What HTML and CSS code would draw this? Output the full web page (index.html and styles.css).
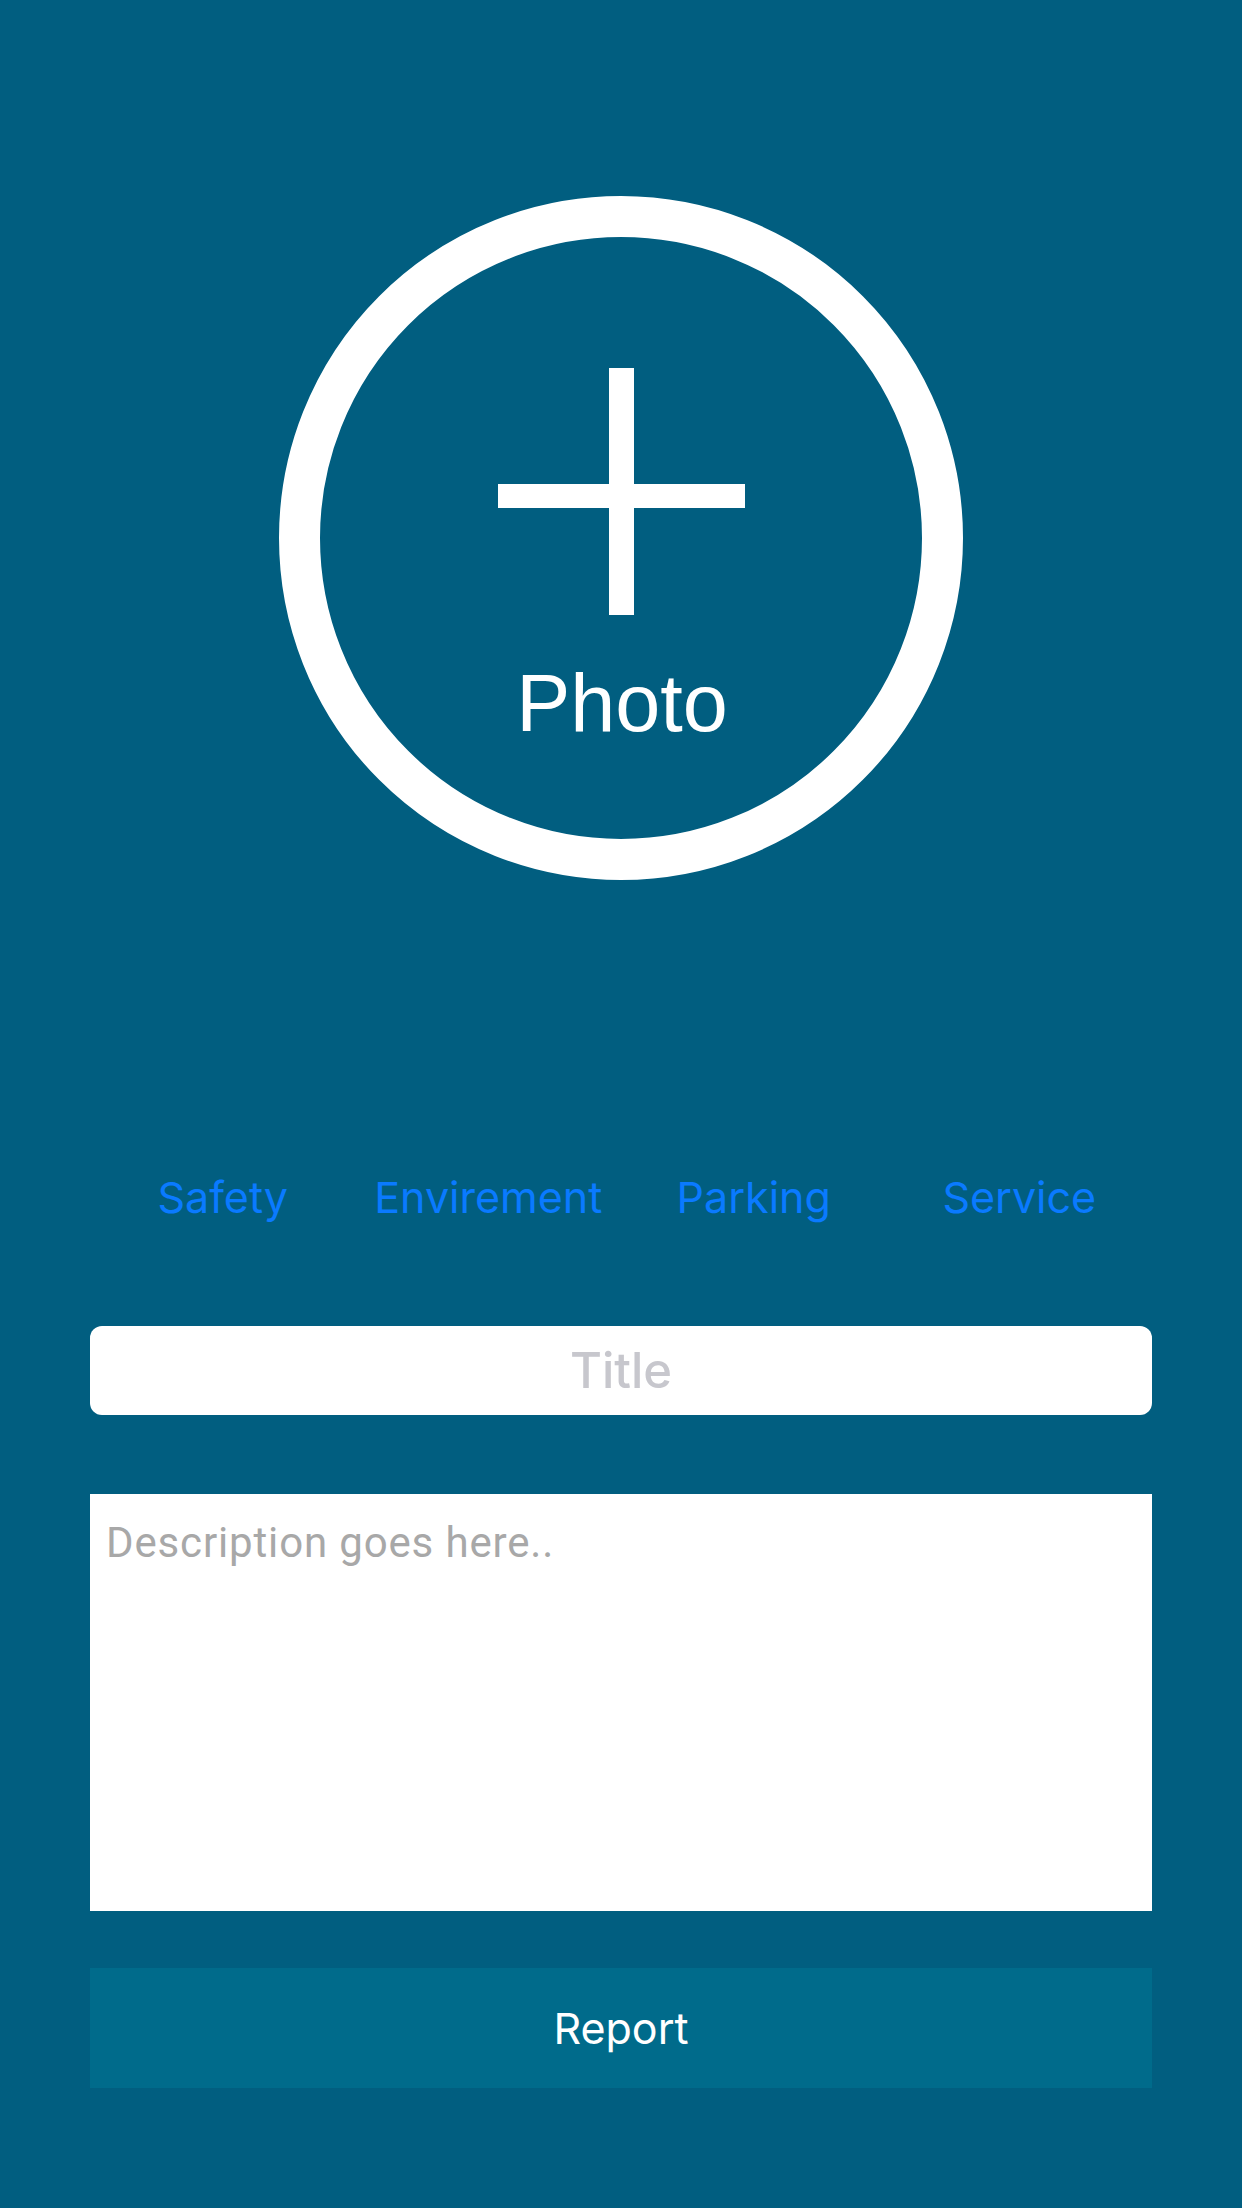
FILE: index.html
```html
<!DOCTYPE html>
<html>
<head>
<meta charset="utf-8">
<link rel="stylesheet" href="styles.css">
</head>
<body>
<div class="screen">
  <div class="photo-wrap">
    <svg class="photo-btn" width="684" height="684" viewBox="0 0 684 684">
      <circle cx="342" cy="342" r="321.5" fill="none" stroke="#ffffff" stroke-width="41"/>
      <rect x="330" y="172" width="25" height="247" fill="#ffffff"/>
      <rect x="219" y="288" width="247" height="24" fill="#ffffff"/>
      <text x="343" y="535" text-anchor="middle" class="photo-label">Photo</text>
    </svg>
  </div>
  <div class="categories">
    <div class="cat">Safety</div>
    <div class="cat">Envirement</div>
    <div class="cat">Parking</div>
    <div class="cat">Service</div>
  </div>
  <div class="title-field"><span class="title-ph">Title</span></div>
  <div class="desc-field"><span class="desc-ph">Description goes here..</span></div>
  <div class="report-btn">Report</div>
</div>
</body>
</html>
```
FILE: styles.css
```css
html, body {
  margin: 0;
  padding: 0;
}
body {
  background: #015e80;
  width: 1242px;
  height: 2208px;
  overflow: hidden;
}
.screen {
  display: flex;
  flex-direction: column;
  padding: 196px 90px 0 90px;
}
.photo-wrap {
  display: flex;
  justify-content: center;
}
.photo-btn {
  display: block;
}
.photo-label {
  font-family: "Liberation Sans", Arial, sans-serif;
  font-size: 81px;
  fill: #ffffff;
}
.categories {
  margin-top: 287px;
  display: grid;
  grid-template-columns: repeat(4, 1fr);
  height: 60px;
}
.cat {
  font-family: Inter, "Noto Sans", sans-serif;
  font-size: 43px;
  line-height: 60px;
  color: #0a7aff;
  text-align: center;
  letter-spacing: 0;
}
.title-field {
  margin-top: 99px;
  height: 89px;
  background: #ffffff;
  border-radius: 12px;
  display: flex;
  align-items: center;
  justify-content: center;
}
.title-ph {
  font-family: Inter, "Noto Sans", sans-serif;
  font-size: 49px;
  font-weight: 500;
  color: #c7c7cd;
  letter-spacing: 0;
}
.desc-field {
  margin-top: 79px;
  height: 417px;
  background: #ffffff;
  box-sizing: border-box;
  padding: 24px 16px;
}
.desc-ph {
  font-family: Roboto, "Noto Sans", sans-serif;
  font-size: 42px;
  color: #a8a8a8;
  letter-spacing: 0.85px;
}
.report-btn {
  margin-top: 57px;
  height: 120px;
  background: #006b8b;
  display: flex;
  align-items: center;
  justify-content: center;
  font-family: Inter, "Noto Sans", sans-serif;
  font-size: 43px;
  color: #ffffff;
  letter-spacing: 0;
}
```
